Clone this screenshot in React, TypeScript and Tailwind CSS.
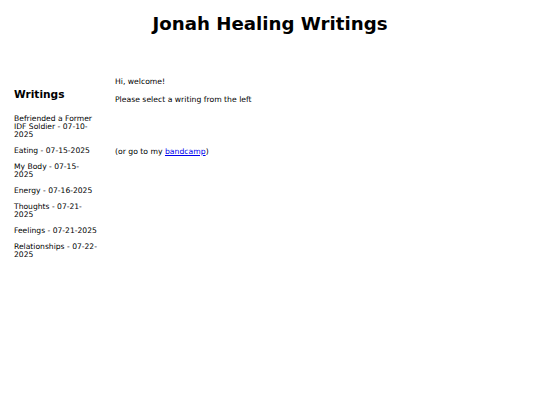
export default function App() {
  const writings = [
    'Befriended a Former IDF Soldier - 07-10-2025',
    'Eating - 07-15-2025',
    'My Body - 07-15-2025',
    'Energy - 07-16-2025',
    'Thoughts - 07-21-2025',
    'Feelings - 07-21-2025',
    'Relationships - 07-22-2025',
  ];

  return (
    <div className="min-h-[405px] w-full bg-white text-black font-['DejaVu_Sans',Verdana,sans-serif]">
      <h1 className="pt-[13px] text-center text-[18.2px] font-bold leading-[22px]">Jonah Healing Writings</h1>
      <div className="mt-[42px] flex">
        <div className="ml-[14px] w-[83.6px] shrink-0">
          <h2 className="mt-[10px] text-[10.6px] font-bold leading-[14px]">Writings</h2>
          <div className="mt-[14px] flex flex-col gap-[8px]">
            {writings.map((w) => (
              <p key={w} className="text-[7.6px] leading-[8px]">{w}</p>
            ))}
          </div>
        </div>
        <div className="ml-[17.4px] flex flex-col text-[7.7px] leading-[10px]">
          <p>Hi, welcome!</p>
          <p className="mt-[8px]">Please select a writing from the left</p>
          <p className="mt-[42px]">
            (or go to my <a href="#" className="text-[#0000ee] underline">bandcamp</a>)
          </p>
        </div>
      </div>
    </div>
  );
}
